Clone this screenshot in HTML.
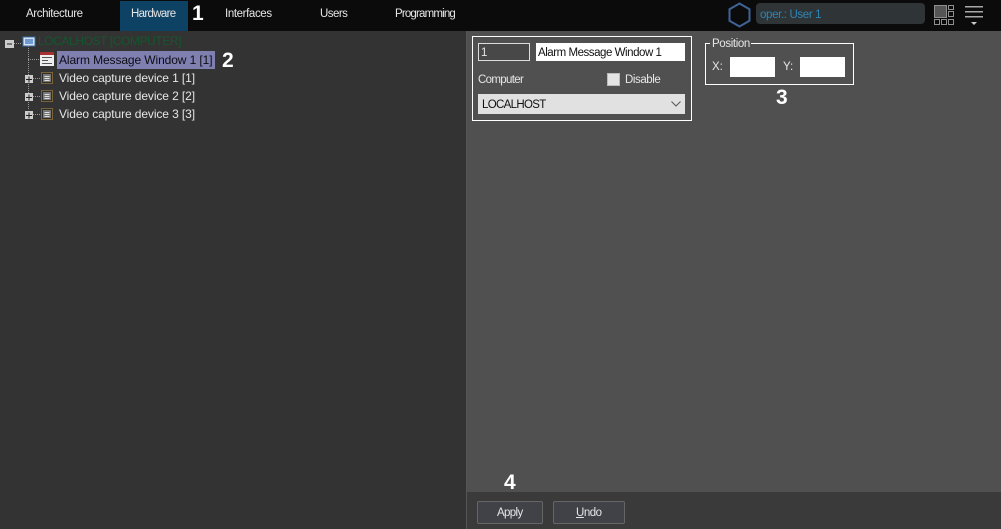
<!DOCTYPE html>
<html><head><meta charset="utf-8"><style>
html,body{margin:0;padding:0;background:#333}
#p{position:relative;width:1001px;height:529px;overflow:hidden;background:#333;font-family:"Liberation Sans",sans-serif;font-size:11.5px;color:#e6e6e6}
#p div,#p span.t{position:absolute;white-space:nowrap;box-sizing:border-box}
.t{line-height:14px}
.n{font-weight:bold;font-size:21px;color:#fff;line-height:24px}
.i{background:#fff}
.tr{font-size:12px;letter-spacing:-.1px}
</style></head><body><div id="p">
<div style="left:0;top:0;width:1001px;height:31px;background:#0b0b0b"></div>
<div style="left:120px;top:1px;width:68px;height:30px;background:#0e4264"></div>
<span class="t" style="left:26px;top:7px;letter-spacing:-.39px">Architecture</span>
<span class="t" style="left:131px;top:7px;letter-spacing:-.67px">Hardware</span>
<span class="t" style="left:225px;top:7px;letter-spacing:-.38px">Interfaces</span>
<span class="t" style="left:320px;top:7px;letter-spacing:-.54px">Users</span>
<span class="t" style="left:395px;top:7px;letter-spacing:-.82px">Programming</span>
<span class="t n" style="left:192px;top:2px">1</span>
<svg style="position:absolute;left:728px;top:2px" width="23" height="26"><path d="M11.500 1.500 21.500 7.200V18.800L11.500 24.500 1.500 18.800V7.200Z" fill="none" stroke="#3f6397" stroke-width="2"/></svg>
<div style="left:756px;top:3px;width:169px;height:21px;background:#2f3436;border-radius:4px"></div>
<span class="t" style="left:760px;top:8px;color:#2f86b8;letter-spacing:-.36px">oper.: User 1</span>
<svg style="position:absolute;left:934px;top:5px" width="21" height="21" fill="none" stroke="#8f8f8f"><rect x=".5" y=".5" width="12" height="12" fill="#555"/><rect x="14.500" y=".5" width="5" height="4"/><rect x="14.500" y="6.500" width="5" height="5"/><rect x=".5" y="14.500" width="5" height="5"/><rect x="7.500" y="14.500" width="5" height="5"/><rect x="14.500" y="14.500" width="5" height="5"/></svg>
<svg style="position:absolute;left:965px;top:5px" width="19" height="20"><path d="M0 1h18v1.500H0zM0 6h18v1.500H0zM0 11h18v1.500H0z" fill="#a8a8a8"/><path d="M6 17h6l-3 3z" fill="#ccc"/></svg>

<div style="left:466px;top:31px;width:1px;height:498px;background:#555"></div>
<div style="left:467px;top:31px;width:534px;height:461px;background:#505050"></div>
<div style="left:467px;top:492px;width:534px;height:37px;background:#3a3a3a"></div>

<!-- tree -->
<svg style="position:absolute;left:0;top:31px" width="60" height="95">
<g stroke="#999" stroke-dasharray="1 1" fill="none"><path d="M14 12.500H22M28.500 15V78M28 28.500H40M33 47.500H40M33 65.500H40M33 83.500H40"/></g>
<rect x="5" y="9" width="9" height="8" fill="#ccc"/><path d="M7 13h5" stroke="#222"/>
<rect x="23" y="6" width="12" height="9" fill="#d5e2f2" stroke="#3a6ea5"/><rect x="25" y="8" width="8" height="5" fill="#6f9bd0"/>
<rect x="40" y="21" width="14" height="14" fill="#eee"/><rect x="40" y="21" width="14" height="3" fill="#a83030"/><path d="M42 26.500h10M42 29.500h6M42 32.500h10" stroke="#555"/>
<g fill="#ccc"><rect x="25" y="44" width="8" height="8"/><rect x="25" y="62" width="8" height="8"/><rect x="25" y="80" width="8" height="8"/></g>
<path d="M26 48.500h6M29 45.500v6M26 66.500h6M29 63.500v6M26 84.500h6M29 81.500v6" stroke="#222"/>
<g fill="#2e2e2e" stroke="#c8963a" stroke-dasharray="1 1"><rect x="41.500" y="41.500" width="11" height="11"/><rect x="41.500" y="59.500" width="11" height="11"/><rect x="41.500" y="77.500" width="11" height="11"/></g>
<g fill="#777"><rect x="43" y="43" width="8" height="8"/><rect x="43" y="61" width="8" height="8"/><rect x="43" y="79" width="8" height="8"/></g>
<path d="M44.500 45.500h5M44.500 47.500h5M44.500 49.500h5M44.500 63.500h5M44.500 65.500h5M44.500 67.500h5M44.500 81.500h5M44.500 83.500h5M44.500 85.500h5" stroke="#ddd"/>
</svg>
<span class="t" style="left:38px;top:34px;color:#17552f;font-size:12px;letter-spacing:-.4px">LOCALHOST [COMPUTER]</span>
<div style="left:57px;top:51px;width:158px;height:18px;background:#7f7fb0"></div>
<span class="t tr" style="left:59px;top:53px;color:#0d0d14">Alarm Message Window 1 [1]</span>
<span class="t tr" style="left:59px;top:71px">Video capture device 1 [1]</span>
<span class="t tr" style="left:59px;top:89px">Video capture device 2 [2]</span>
<span class="t tr" style="left:59px;top:107px">Video capture device 3 [3]</span>
<span class="t n" style="left:222px;top:49px">2</span>

<!-- form -->
<div style="left:472px;top:36px;width:220px;height:85px;border:1px solid #fff"></div>
<div style="left:478px;top:43px;width:52px;height:18px;border:1px solid #ddd;background:#484848"></div>
<span class="t" style="left:481px;top:46px">1</span>
<div class="i" style="left:536px;top:43px;width:149px;height:18px"></div>
<span class="t" style="left:538px;top:46px;color:#111;letter-spacing:-.46px">Alarm Message Window 1</span>
<span class="t" style="left:478px;top:73px;letter-spacing:-.67px">Computer</span>
<div style="left:607px;top:73px;width:13px;height:13px;background:#e4e4e4;border:1px solid #bbb"></div>
<span class="t" style="left:625px;top:73px;letter-spacing:-.43px">Disable</span>
<div style="left:478px;top:94px;width:207px;height:20px;background:#e1e1e1"></div>
<span class="t" style="left:482px;top:98px;color:#111;letter-spacing:-.67px">LOCALHOST</span>
<svg style="position:absolute;left:670px;top:100px" width="12" height="8"><path d="M1.500 1.500 6 6l4.500-4.500" fill="none" stroke="#555"/></svg>

<div style="left:705px;top:43px;width:149px;height:42px;border:1px solid #fff"></div>
<div style="left:710px;top:38px;width:41px;height:12px;background:#505050"></div>
<span class="t" style="left:712px;top:37px;letter-spacing:-.37px">Position</span>
<span class="t" style="left:712px;top:60px">X:</span>
<div class="i" style="left:730px;top:57px;width:45px;height:20px"></div>
<span class="t" style="left:783px;top:60px">Y:</span>
<div class="i" style="left:800px;top:57px;width:45px;height:20px"></div>
<span class="t n" style="left:776px;top:86px">3</span>

<span class="t n" style="left:504px;top:471px">4</span>
<div style="left:477px;top:501px;width:66px;height:23px;background:#414148;border:1px solid #666;border-radius:2px"></div>
<span class="t" style="left:497px;top:506px;letter-spacing:-.64px">Apply</span>
<div style="left:553px;top:501px;width:72px;height:23px;background:#414148;border:1px solid #666;border-radius:2px"></div>
<span class="t" style="left:576px;top:506px;letter-spacing:-.5px"><u>U</u>ndo</span>
</div></body></html>
